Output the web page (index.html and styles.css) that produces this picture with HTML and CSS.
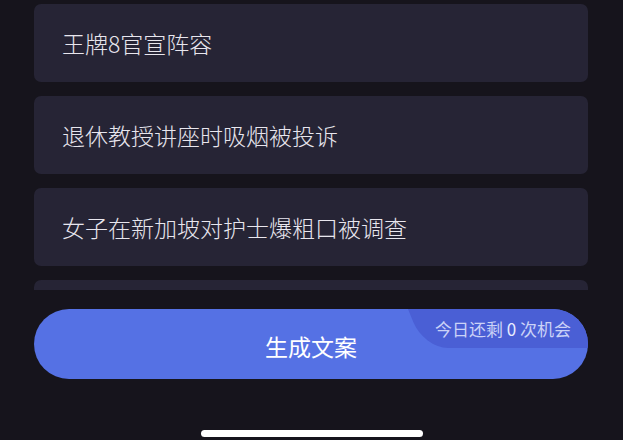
FILE: index.html
```html
<!DOCTYPE html>
<html lang="zh-CN">
<head>
    <meta charset="UTF-8">
    <meta name="viewport" content="width=device-width, initial-scale=1.0">
    <title>生成文案</title>
    <link rel="stylesheet" href="styles.css">
</head>
<body>
    <div class="page">
        <!-- 热点列表 -->
        <div class="topic-list">
            <div class="topic-card">王牌8官宣阵容</div>
            <div class="topic-card">退休教授讲座时吸烟被投诉</div>
            <div class="topic-card">女子在新加坡对护士爆粗口被调查</div>
            <div class="topic-card"></div>
        </div>

        <div class="footer">
            <button class="generate-btn">
                生成文案
                <span class="quota">今日还剩 <b>0</b> 次机会</span>
            </button>
        </div>

        <div class="home-bar"></div>
    </div>
</body>
</html>
```

FILE: styles.css
```css
* {
    box-sizing: border-box;
}

body {
    margin: 0;
    background-color: #16141c;
    font-family: "Noto Sans CJK SC", "Noto Sans", sans-serif;
    overflow: hidden;
}

.page {
    width: 623px;
    height: 440px;
    display: flex;
    flex-direction: column;
}

.topic-list {
    height: 290px;
    overflow: hidden;
    padding: 4px 35px 0 34px;
    display: flex;
    flex-direction: column;
    gap: 14px;
}

.topic-card {
    flex: 0 0 78px;
    background-color: #262435;
    border-radius: 7px;
    padding-left: 28px;
    display: flex;
    align-items: center;
    font-size: 23px;
    font-weight: 300;
    color: #e8e6ee;
}

.footer {
    padding: 19px 35px 0 34px;
}

.generate-btn {
    position: relative;
    width: 100%;
    height: 70px;
    border: none;
    border-radius: 35px;
    background-color: #5571e4;
    color: #ffffff;
    font-family: inherit;
    font-size: 23px;
    padding: 3px 0 0;
    overflow: hidden;
    cursor: pointer;
}

/* 右上角次数提示，左边是斜边 */
.quota {
    position: absolute;
    top: 0;
    right: 0;
    width: 180px;
    height: 39px;
    padding: 5px 0 0 27px;
    font-size: 17px;
    color: #cbd2f7;
    text-align: left;
    line-height: 30px;
    white-space: nowrap;
    z-index: 0;
}

.quota::before {
    content: "";
    position: absolute;
    top: 0;
    left: 0;
    right: -40px;
    bottom: 0;
    background-color: #4a5fd5;
    border-bottom-left-radius: 24px 26px;
    transform: skewX(22deg);
    transform-origin: top left;
    z-index: -1;
}

.quota b {
    font-weight: normal;
    color: #e8ecff;
}

.home-bar {
    width: 222px;
    height: 7px;
    margin: 51px auto 0;
    background-color: #ffffff;
    border-radius: 4px;
}
```
